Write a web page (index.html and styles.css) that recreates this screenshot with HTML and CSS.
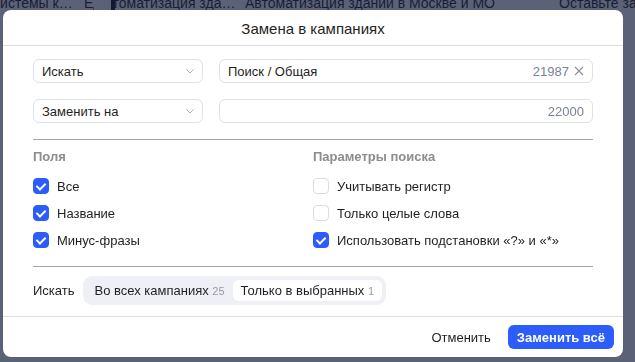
FILE: index.html
```html
<!DOCTYPE html>
<html lang="ru">
<head>
    <meta charset="UTF-8">
    <meta name="viewport" content="width=device-width, initial-scale=1.0">
    <title>Замена в кампаниях</title>
    <link rel="stylesheet" href="styles.css">
</head>
<body>
    <div class="page">
        <div class="row">
            <span class="cell c1">Системы к…</span>
            <span class="cell c2">Ед</span>
            <span class="cell c3"><span class="shift">Автоматизация зда…</span></span>
            <span class="cell c4">Автоматизация здании в Москве и МО</span>
            <span class="cell c5">Оставьте заявку</span>
        </div>
    </div>
    <div class="overlay"></div>

    <div class="modal">
        <div class="modal-head">Замена в кампаниях</div>

        <div class="modal-body">
            <div class="field-row">
                <div class="select">
                    <span>Искать</span>
                    <svg class="chevron" width="8" height="5" viewBox="0 0 8 5"><path d="M0.5 0.5 L4 4 L7.5 0.5" fill="none" stroke="#a9adba" stroke-width="1"/></svg>
                </div>
                <div class="input">
                    <span class="value">Поиск / Общая</span>
                    <span class="count">21987</span>
                    <svg class="clear" width="10" height="10" viewBox="0 0 10 10"><path d="M1 1 L9 9 M9 1 L1 9" stroke="#8a8f9e" stroke-width="1.1"/></svg>
                </div>
            </div>
            <div class="field-row">
                <div class="select">
                    <span>Заменить на</span>
                    <svg class="chevron" width="8" height="5" viewBox="0 0 8 5"><path d="M0.5 0.5 L4 4 L7.5 0.5" fill="none" stroke="#a9adba" stroke-width="1"/></svg>
                </div>
                <div class="input">
                    <span class="value"></span>
                    <span class="count">22000</span>
                </div>
            </div>

            <div class="divider"></div>

            <div class="options">
                <div class="col">
                    <div class="col-title">Поля</div>
                    <label class="check"><span class="box on"></span>Все</label>
                    <label class="check"><span class="box on"></span>Название</label>
                    <label class="check"><span class="box on"></span>Минус-фразы</label>
                </div>
                <div class="col">
                    <div class="col-title">Параметры поиска</div>
                    <label class="check"><span class="box"></span>Учитывать регистр</label>
                    <label class="check"><span class="box"></span>Только целые слова</label>
                    <label class="check"><span class="box on"></span>Использовать подстановки «?» и «*»</label>
                </div>
            </div>

            <div class="divider"></div>

            <div class="scope">
                <span class="scope-label">Искать</span>
                <div class="segmented">
                    <span class="seg">Во всех кампаниях <small>25</small></span>
                    <span class="seg active">Только в выбранных <small>1</small></span>
                </div>
            </div>
        </div>

        <div class="modal-foot">
            <button class="btn-text">Отменить</button>
            <button class="btn-primary">Заменить всё</button>
        </div>
    </div>
</body>
</html>
```

FILE: styles.css
```css
body {
    margin: 0;
    font-family: "Liberation Sans", Arial, sans-serif;
    font-size: 13px;
    color: #1f1f24;
    overflow: hidden;
    background: #ffffff;
}

/* page behind the dialog */
.page {
    margin-top: -10px;
}
.page .row {
    height: 27px;
    line-height: 27px;
    display: flex;
    white-space: nowrap;
    font-size: 14px;
    color: #1a1d2a;
}
.page .cell {
    overflow: hidden;
    flex: none;
    box-sizing: border-box;
}
.page .c1 { width: 87px; margin-left: -10px; }
.page .c2 { width: 17px; padding-left: 7px; margin-right: 17px; }
.page .c3 { width: 134px; border-left: 4px solid #0d0f18; }
.page .c3 .shift { margin-left: -19px; }
.page .c4 { width: 314px; }

.overlay {
    position: fixed;
    inset: 0;
    background: rgba(22, 30, 60, 0.7);
}

.modal {
    position: absolute;
    left: 3px;
    top: 10px;
    width: 620px;
    height: 347px;
    background: #fff;
    border-radius: 8px;
    display: flex;
    flex-direction: column;
}

.modal-head {
    height: 35px;
    line-height: 37px;
    text-align: center;
    font-size: 15px;
    border-bottom: 1px solid #dcdde5;
}

.modal-body {
    padding: 13px 30px 11px;
    border-bottom: 1px solid #dcdde5;
}

.field-row {
    display: flex;
    gap: 16px;
    margin-bottom: 16px;
}
.field-row:last-of-type { margin-bottom: 10px; }

.select, .input {
    height: 22px;
    border: 1px solid #dfe1e8;
    border-radius: 6px;
    display: flex;
    align-items: center;
    padding: 0 8px;
}
.select {
    width: 152px;
    justify-content: space-between;
}
.input {
    flex: 1;
    gap: 5px;
}
.input .value { flex: 1; }
.input .count { color: #7b8196; }

.divider {
    height: 1px;
    background: #a5a6ab;
}

.options {
    display: flex;
    padding: 9px 0 18px;
}
.col {
    width: 280px;
    display: flex;
    flex-direction: column;
    gap: 11px;
}
.col-title {
    font-weight: bold;
    color: #8d8d91;
    margin-bottom: 3px;
}
.check {
    display: flex;
    align-items: center;
    gap: 8px;
    height: 16px;
}
.box {
    width: 14px;
    height: 14px;
    border: 1px solid #d9dce5;
    border-radius: 4px;
    background: #fff;
    position: relative;
}
.box.on {
    background: #2c5cfb;
    border-color: #2c5cfb;
}
.box.on::after {
    content: "";
    position: absolute;
    left: 4px;
    top: 2px;
    width: 4px;
    height: 7px;
    border: solid #fff;
    border-width: 0 2px 2px 0;
    transform: rotate(45deg);
}

.scope {
    display: flex;
    align-items: center;
    gap: 8px;
    padding-top: 9px;
}
.segmented {
    display: flex;
    background: #eef0f5;
    border-radius: 9px;
    padding: 4px;
}
.seg {
    padding: 0 8px;
    height: 21px;
    line-height: 21px;
    border-radius: 6px;
}
.seg small {
    font-size: 11px;
    color: #9a9ca4;
}
.seg.active { background: #fff; }

.modal-foot {
    flex: 1;
    display: flex;
    justify-content: flex-end;
    align-items: center;
    gap: 9px;
    padding: 0 9px;
}
button {
    font-family: inherit;
    font-size: 13px;
    border: none;
    cursor: pointer;
}
.btn-text {
    background: none;
    color: #1f1f24;
    padding: 0 8px;
    height: 24px;
}
.btn-primary {
    background: #2c5cfb;
    color: #fff;
    height: 24px;
    border-radius: 6px;
    padding: 0 9px;
    font-weight: bold;
}
```
